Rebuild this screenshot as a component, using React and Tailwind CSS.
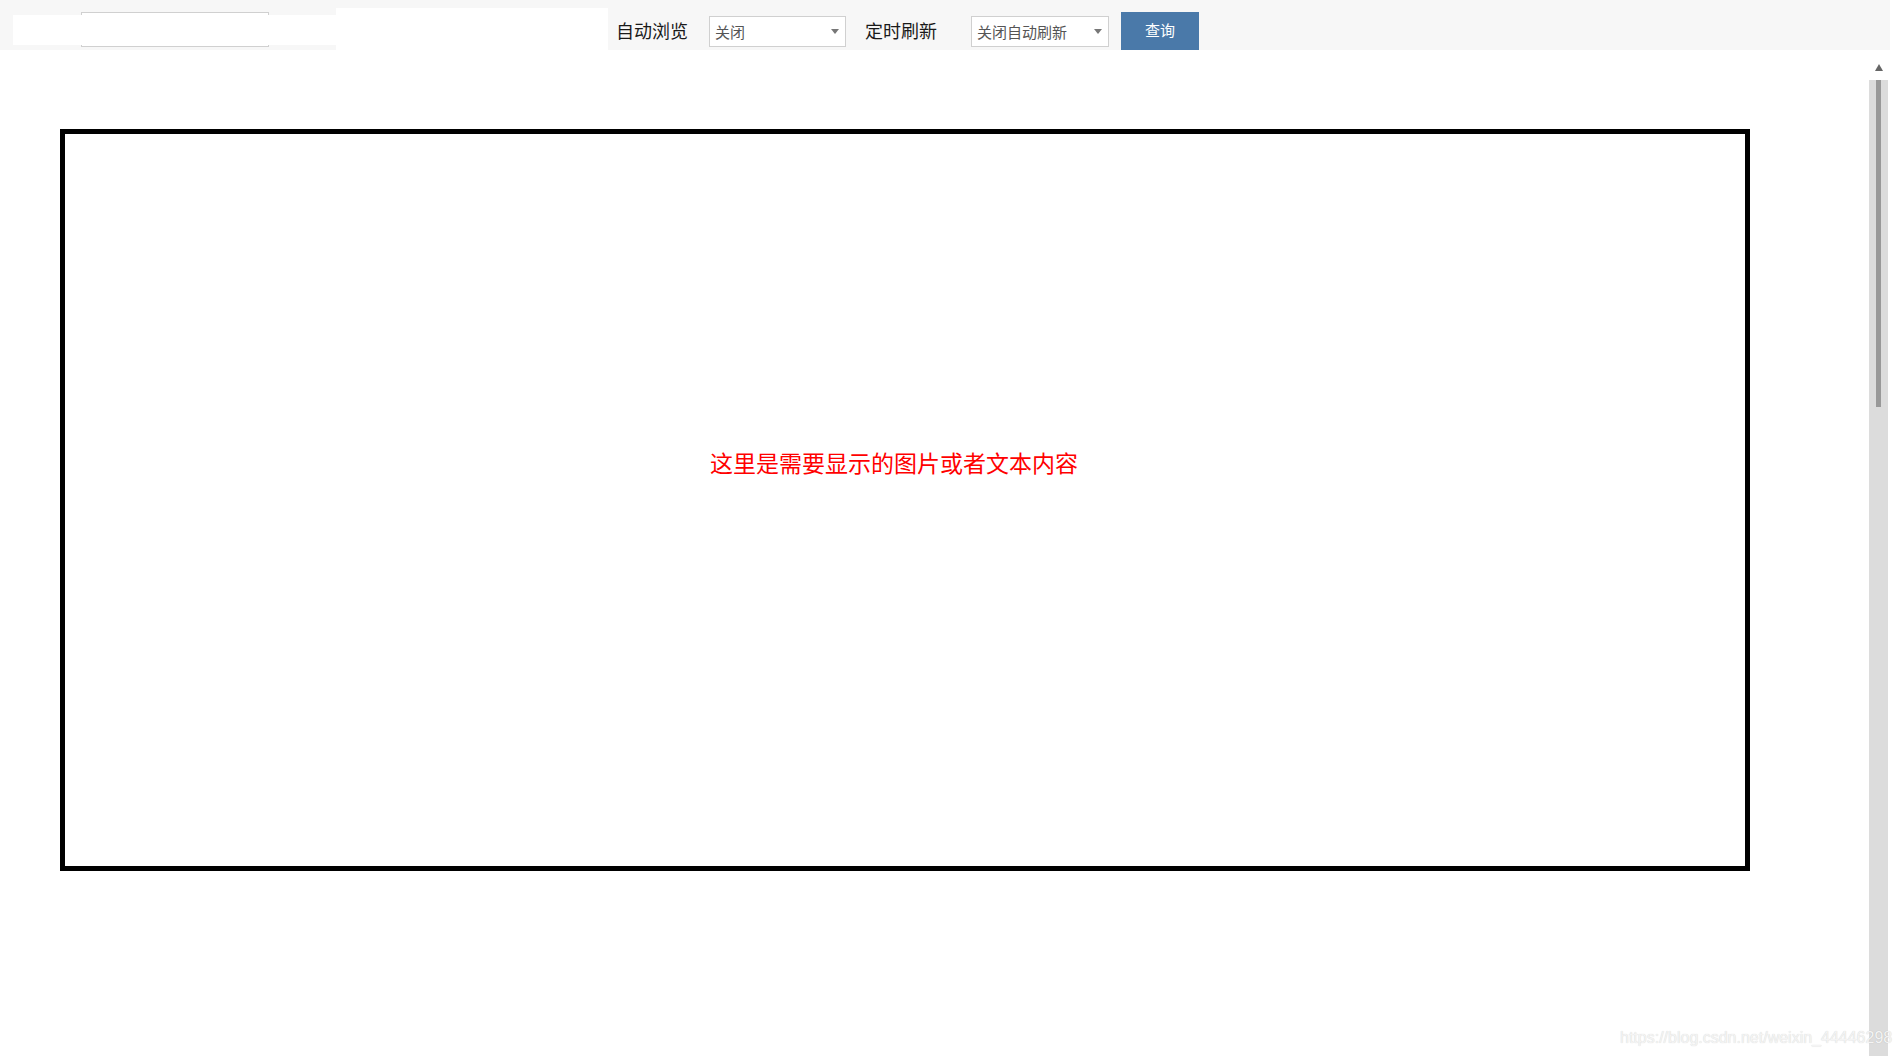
import React from "react";

const cjk = { fontFamily: '"Noto Sans CJK SC", "Noto Sans", sans-serif' };

function Select({ value, width }) {
  return (
    <div
      className={`relative mt-[16px] h-[31px] ${width} border border-[#d0d0d0] bg-white flex items-center pl-[5px]`}
    >
      <span className="text-[15px] leading-none text-[#555]">{value}</span>
      {/* dropdown arrow */}
      <span className="absolute right-[6px] top-[12px] w-0 h-0 border-l-[4px] border-r-[4px] border-t-[5px] border-l-transparent border-r-transparent border-t-[#777]" />
    </div>
  );
}

export default function App() {
  return (
    <div className="relative w-[1901px] h-[1056px] overflow-hidden bg-white" style={cjk}>
      {/* toolbar */}
      <div className="relative w-[1890px] h-[50px] bg-[#f7f7f7] flex items-start">
        <div className="ml-[81px] mt-[12px] w-[188px] h-[35px] border border-[#d0d0d0] bg-white" />
        <div className="ml-[67px] mt-[8px] w-[272px] h-[42px] bg-white" />
        <div className="ml-[8px] mt-[16px] h-[31px] pb-[4px] flex items-center text-[18px] leading-none text-[#1a1a1a] whitespace-nowrap">
          自动浏览
        </div>
        <div className="ml-[21px] flex">
          <Select value="关闭" width="w-[137px]" />
        </div>
        <div className="ml-[19px] mt-[16px] h-[31px] pb-[4px] flex items-center text-[18px] leading-none text-[#1a1a1a] whitespace-nowrap">
          定时刷新
        </div>
        <div className="ml-[34px] flex">
          <Select value="关闭自动刷新" width="w-[138px]" />
        </div>
        <button className="ml-[12px] mt-[12px] w-[78px] h-[38px] pb-[3px] bg-[#4a79a9] text-white text-[15px] leading-none flex items-center justify-center">
          查询
        </button>
        {/* white blanked-out area over the left input */}
        <div className="absolute left-[13px] top-[15px] w-[323px] h-[30px] bg-white" />
      </div>

      {/* body */}
      <div className="flex h-[1006px]">
        <div className="w-[1869px]">
          <div className="ml-[60px] mt-[79px] w-[1690px] h-[742px] border-[5px] border-black">
            <div className="pt-[317px] pr-[22px] text-center text-[23px] leading-none text-[#ff0000] whitespace-nowrap">
              这里是需要显示的图片或者文本内容
            </div>
          </div>
        </div>
        {/* scrollbar */}
        <div className="w-[19px] flex flex-col">
          <div className="h-[30px] flex justify-center pt-[14px]">
            <span className="w-0 h-0 border-l-[4px] border-r-[4px] border-b-[7px] border-l-transparent border-r-transparent border-b-[#666]" />
          </div>
          <div className="flex-1 bg-[#dcdcdc]">
            <div className="ml-[7px] w-[5px] h-[327px] bg-[#999]" />
          </div>
        </div>
      </div>

      {/* watermark */}
      <div
        className="absolute left-[1620px] top-[1029px] text-[16px] leading-[18px] text-[#f4f4f4] whitespace-nowrap [text-shadow:0_0_1px_rgba(0,0,0,0.2)]"
        style={{ fontFamily: '"Liberation Sans", Arial, sans-serif' }}
      >
        https://blog.csdn.net/weixin_44446298
      </div>
    </div>
  );
}
